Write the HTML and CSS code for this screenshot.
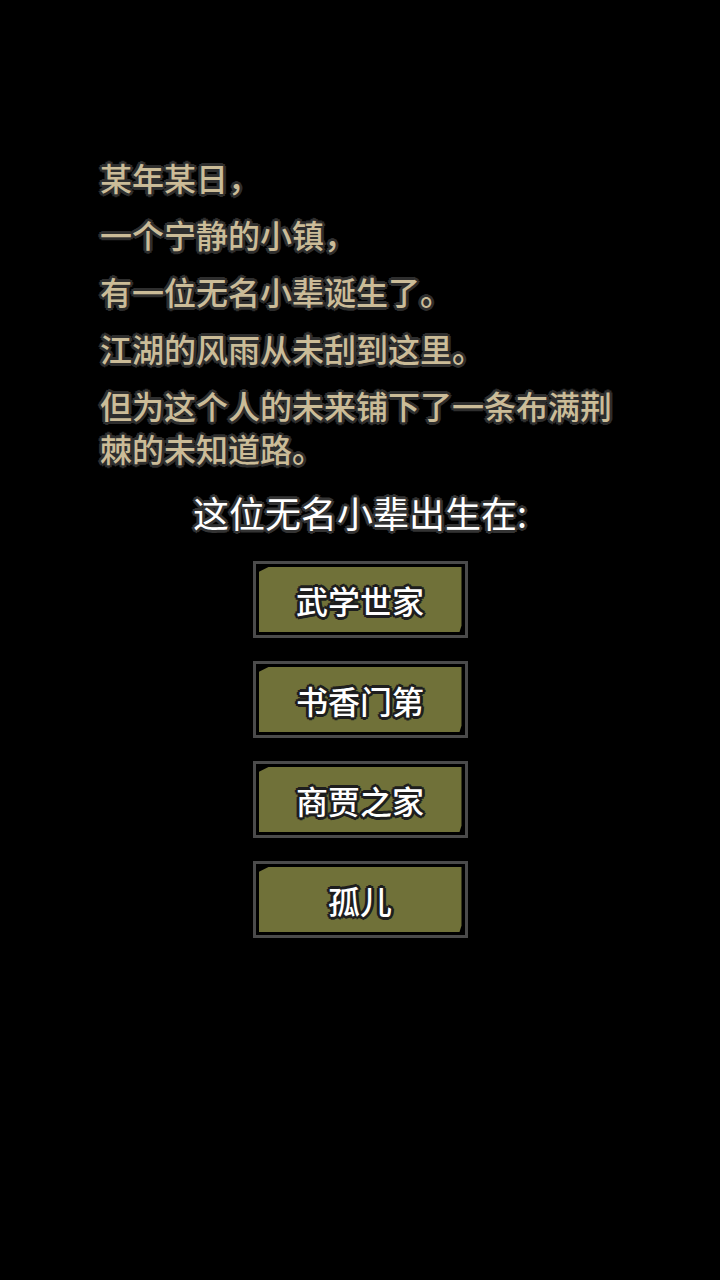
FILE: index.html
```html
<!DOCTYPE html>
<html lang="zh">
<head>
    <meta charset="UTF-8">
    <meta name="viewport" content="width=device-width, initial-scale=1.0">
    <title>出生</title>
    <link rel="stylesheet" href="styles.css">
</head>
<body>

    <div class="screen">
        <div class="story">
            <p>某年某日，</p>
            <p>一个宁静的小镇，</p>
            <p>有一位无名小辈诞生了。</p>
            <p>江湖的风雨从未刮到这里。</p>
            <p>但为这个人的未来铺下了一条布满荆棘的未知道路。</p>
        </div>

        <h1 class="question">这位无名小辈出生在:</h1>

        <div class="choices">
            <button class="choice"><span>武学世家</span></button>
            <button class="choice"><span>书香门第</span></button>
            <button class="choice"><span>商贾之家</span></button>
            <button class="choice"><span>孤儿</span></button>
        </div>
    </div>

</body>
</html>
```

FILE: styles.css
```css
body {
    margin: 0;
    background: #000;
    font-family: "Noto Sans CJK SC", "Noto Sans", sans-serif;
}
.screen {
    width: 720px;
    height: 1280px;
    padding-top: 156px;
    box-sizing: border-box;
}
.story {
    width: 522px;
    margin-left: 100px;
}
.story p {
    margin: 0 0 14px 0;
    font-size: 32px;
    line-height: 43px;
    font-weight: 500;
    color: #cbbc98;
    text-shadow:
        -2px -2px 0 #2e2e2e, 2px -2px 0 #2e2e2e,
        -2px 2px 0 #2e2e2e, 2px 2px 0 #2e2e2e,
        0 -3px 0 #2e2e2e, 0 3px 0 #2e2e2e,
        -3px 0 0 #2e2e2e, 3px 0 0 #2e2e2e;
}
.story p:last-child {
    margin-bottom: 0;
}
.question {
    margin: 20px 0 0 0;
    text-align: center;
    font-size: 36px;
    line-height: 44px;
    font-weight: 400;
    color: #fff;
    text-shadow:
        -2px -2px 0 #333, 2px -2px 0 #333,
        -2px 2px 0 #333, 2px 2px 0 #333,
        0 -3px 0 #333, 0 3px 0 #333,
        -3px 0 0 #333, 3px 0 0 #333;
}
.choices {
    margin-top: 27px;
    display: flex;
    flex-direction: column;
    align-items: center;
    gap: 23px;
}
.choice {
    width: 215px;
    height: 77px;
    padding: 3px;
    border: 3px solid #4b4b4b;
    background: #000;
    box-sizing: border-box;
    cursor: pointer;
    display: flex;
}
.choice span {
    flex: 1;
    display: flex;
    align-items: center;
    justify-content: center;
    background: #707139;
    clip-path: polygon(10px 0, 100% 0, 100% 90%, 99% 100%, 0 100%, 0 5px);
    font-family: "Noto Sans CJK SC", "Noto Sans", sans-serif;
    font-size: 32px;
    font-weight: 500;
    color: #fff;
    text-shadow:
        -2px -2px 0 #1e1e1e, 2px -2px 0 #1e1e1e,
        -2px 2px 0 #1e1e1e, 2px 2px 0 #1e1e1e,
        0 -3px 0 #1e1e1e, 0 3px 0 #1e1e1e,
        -3px 0 0 #1e1e1e, 3px 0 0 #1e1e1e;
}
```
